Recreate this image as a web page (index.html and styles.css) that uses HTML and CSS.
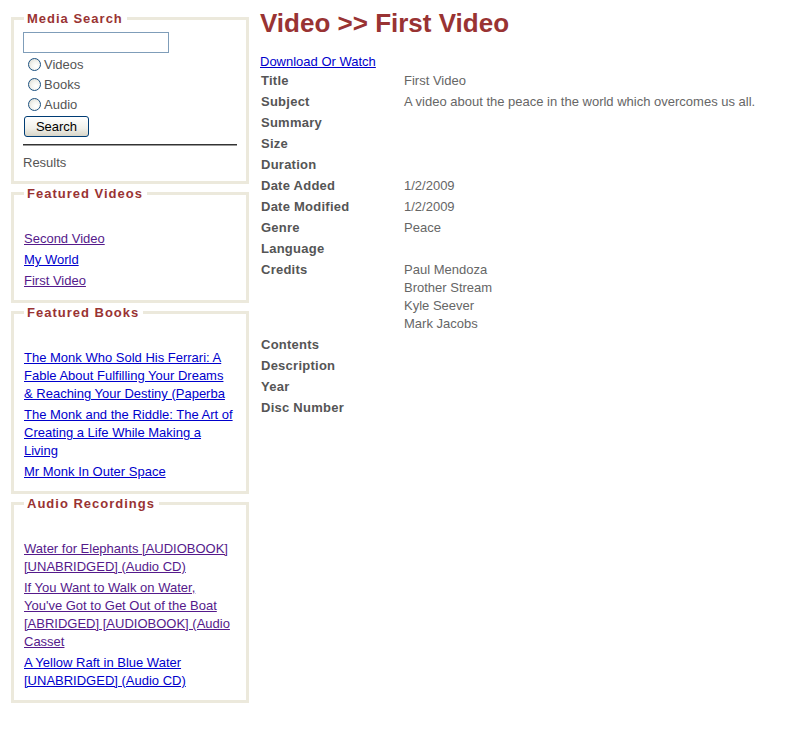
FILE: index.html
```html
<!DOCTYPE html>
<html>
<head>
<meta charset="utf-8">
<title>Video >> First Video</title>
<link rel="stylesheet" href="styles.css">
</head>
<body>
<div class="layout">
  <aside class="sidebar">
    <fieldset class="box box-search">
      <legend>Media Search</legend>
      <input class="search-input" type="text">
      <label class="radio"><input type="radio" name="t"><span>Videos</span></label>
      <label class="radio"><input type="radio" name="t"><span>Books</span></label>
      <label class="radio"><input type="radio" name="t"><span>Audio</span></label>
      <button class="btn" type="button">Search</button>
      <hr class="rule">
      <div class="results">Results</div>
    </fieldset>
    <fieldset class="box">
      <legend>Featured Videos</legend>
      <ul class="links">
        <li><a class="visited" href="#">Second Video</a></li>
        <li><a href="#">My World</a></li>
        <li><a class="visited" href="#">First Video</a></li>
      </ul>
    </fieldset>
    <fieldset class="box">
      <legend>Featured Books</legend>
      <ul class="links">
        <li><a href="#">The Monk Who Sold His Ferrari: A Fable About Fulfilling Your Dreams &amp; Reaching Your Destiny (Paperba</a></li>
        <li><a href="#">The Monk and the Riddle: The Art of Creating a Life While Making a Living</a></li>
        <li><a href="#">Mr Monk In Outer Space</a></li>
      </ul>
    </fieldset>
    <fieldset class="box">
      <legend>Audio Recordings</legend>
      <ul class="links">
        <li><a class="visited" href="#">Water for Elephants [AUDIOBOOK] [UNABRIDGED] (Audio CD)</a></li>
        <li><a class="visited" href="#">If You Want to Walk on Water, You've Got to Get Out of the Boat [ABRIDGED] [AUDIOBOOK] (Audio Casset</a></li>
        <li><a href="#">A Yellow Raft in Blue Water [UNABRIDGED] (Audio CD)</a></li>
      </ul>
    </fieldset>
  </aside>
  <main class="main">
    <h1 class="title">Video &gt;&gt; First Video</h1>
    <a class="download" href="#">Download Or Watch</a>
    <dl class="details">
      <dt>Title</dt><dd>First Video</dd>
      <dt>Subject</dt><dd>A video about the peace in the world which overcomes us all.</dd>
      <dt>Summary</dt><dd></dd>
      <dt>Size</dt><dd></dd>
      <dt>Duration</dt><dd></dd>
      <dt>Date Added</dt><dd>1/2/2009</dd>
      <dt>Date Modified</dt><dd>1/2/2009</dd>
      <dt>Genre</dt><dd>Peace</dd>
      <dt>Language</dt><dd></dd>
      <dt>Credits</dt><dd>Paul Mendoza<br>Brother Stream<br>Kyle Seever<br>Mark Jacobs</dd>
      <dt>Contents</dt><dd></dd>
      <dt>Description</dt><dd></dd>
      <dt>Year</dt><dd></dd>
      <dt>Disc Number</dt><dd></dd>
    </dl>
  </main>
</div>
</body>
</html>
```

FILE: styles.css
```css
body {
  margin: 8px;
  background: #fff;
  font-family: "Liberation Sans", Arial, sans-serif;
  font-size: 13px;
  color: #555;
}

.layout {
  display: flex;
  align-items: flex-start;
}

.sidebar {
  width: 238px;
  margin: 3px 0 0 3px;
  display: flex;
  flex-direction: column;
  gap: 2px;
}

.box {
  margin: 0;
  border: 3px solid #ece9dc;
  padding: 0 9px 10px 9px;
  min-width: 0;
}

.box-search {
  padding-bottom: 9px;
}

.box legend {
  color: #993333;
  font-weight: bold;
  font-size: 13px;
  line-height: 15px;
  letter-spacing: 1px;
  padding: 0 4px 0 3px;
  margin-left: 1px;
}

.search-input {
  display: block;
  box-sizing: border-box;
  width: 146px;
  height: 21px;
  margin: 6px 0 1px 0;
  border: 1px solid #7f9db9;
  padding: 0 2px;
  font: inherit;
}

.radio {
  display: flex;
  align-items: center;
  height: 20px;
  padding-left: 5px;
  color: #555;
}

.radio input {
  -webkit-appearance: none;
  appearance: none;
  width: 13px;
  height: 13px;
  margin: 0 3px 0 0;
  border: 1px solid #1c5180;
  border-radius: 50%;
  background: radial-gradient(circle at 65% 65%, #fff 0, #f3f3ee 45%, #d6d5cc 100%);
  box-sizing: border-box;
}

.btn {
  display: block;
  margin: 2px 0 0 1px;
  width: 65px;
  height: 21px;
  padding: 0;
  border: 1px solid #003c74;
  border-radius: 3px;
  background: linear-gradient(#ffffff, #f0f0ea 60%, #d8d5c8);
  font-family: "Liberation Sans", Arial, sans-serif;
  font-size: 13px;
  color: #000;
}

.rule {
  margin: 7px 0 0 0;
  border: 0;
  border-top: 1px solid #333;
  border-bottom: 1px solid #999;
}

.results {
  margin-top: 8px;
  line-height: 18px;
}

.links {
  list-style: none;
  margin: 0;
  padding: 29px 3px 0 1px;
}

.links li {
  line-height: 18px;
  margin-bottom: 3px;
}

.links li:last-child {
  margin-bottom: 0;
}

a {
  color: #0000cc;
  text-decoration: underline;
}

a.visited {
  color: #551a8b;
}

.main {
  margin-left: 11px;
  flex: 1;
}

.title {
  margin: 0;
  font-size: 26px;
  line-height: 30px;
  font-weight: bold;
  color: #993333;
}

.download {
  display: inline-block;
  margin-top: 15px;
  line-height: 18px;
}

.details {
  margin: 1px 0 0 0;
  display: grid;
  grid-template-columns: 144px 1fr;
  row-gap: 3px;
  line-height: 18px;
}

.details dt {
  margin: 0;
  padding-left: 1px;
  font-weight: bold;
  letter-spacing: 0.25px;
  color: #555;
}

.details dd {
  margin: 0;
  color: #666;
}
```
